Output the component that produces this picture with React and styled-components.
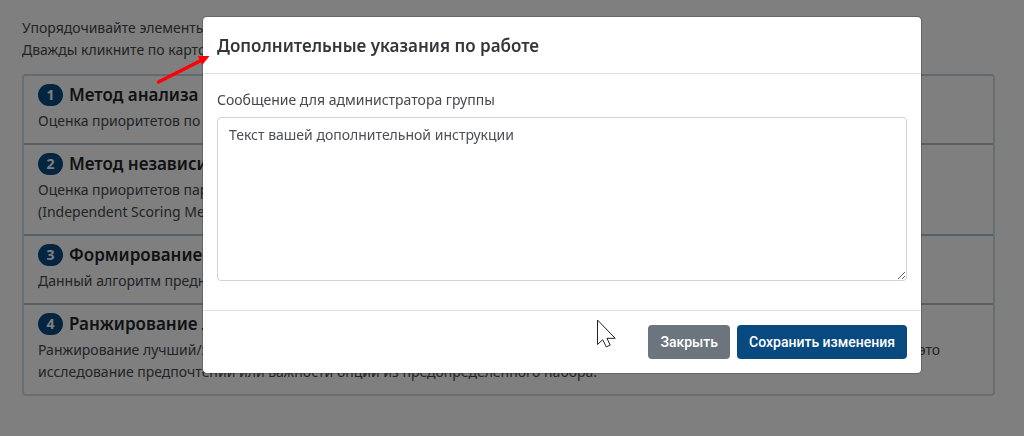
import { useState } from "react";
import styled, { createGlobalStyle } from "styled-components";

const GlobalStyle = createGlobalStyle`
  * {
    box-sizing: border-box;
  }

  body {
    margin: 0;
    color: #45494e;
    background-color: #ffffff;
    font-family: "Noto Sans", "Open Sans", sans-serif;
    font-size: 14px;
    line-height: 22px;
  }
`;

const Page = styled.main`
  min-height: 100vh;
  padding: 17px 29px 40px 22px;
`;

const Intro = styled.p`
  margin: 0 0 13px;
`;

const MethodList = styled.ol`
  list-style: none;
  margin: 0;
  padding: 0;
  border: 2px solid #d2dce6;
  border-top-color: #c4d4e2;
  border-radius: 4px;
`;

const MethodItem = styled.li`
  padding: 8px 14px 11px;

  & + & {
    border-top: 2px solid #a8c0d4;
  }
`;

const MethodTitle = styled.h2`
  display: flex;
  align-items: center;
  gap: 6px;
  margin: 0 0 4px;
  color: #212529;
  font-size: 17px;
  font-weight: 600;
  line-height: 22px;
`;

const Badge = styled.span`
  width: 25px;
  border-radius: 11px;
  color: #ffffff;
  background-color: #084a80;
  font-size: 14px;
  font-weight: 700;
  text-align: center;
`;

const MethodText = styled.p`
  margin: 0;
`;

const Backdrop = styled.div`
  position: fixed;
  inset: 0;
  padding: 17px 103px 17px 203px;
  background-color: rgba(0, 0, 0, 0.5);
`;

const Dialog = styled.form`
  border-radius: 4px;
  background-color: #ffffff;
  box-shadow: 0 0 0 1px rgba(0, 0, 0, 0.2);
`;

const DialogHeader = styled.header`
  padding: 18px 14px 16px;
  border-bottom: 1px solid #dee2e6;
`;

const DialogTitle = styled.h1`
  margin: 0;
  color: #33373c;
  font-size: 17px;
  font-weight: 600;
  line-height: 22px;
`;

const DialogBody = styled.div`
  padding: 15px 14px 29px;
`;

const Label = styled.label`
  display: block;
  margin-bottom: 6px;
`;

const TextArea = styled.textarea`
  display: block;
  width: 100%;
  height: 164px;
  padding: 6px 11px;
  border: 1px solid #ced4da;
  border-radius: 4px;
  color: #495057;
  font: inherit;
  resize: vertical;
`;

const DialogFooter = styled.footer`
  display: flex;
  justify-content: flex-end;
  gap: 7px;
  padding: 14px;
  border-top: 1px solid #dee2e6;
`;

const Button = styled.button`
  padding: 6px 12px;
  border: 0;
  border-radius: 4px;
  color: #ffffff;
  background-color: ${({ $primary }) => ($primary ? "#084a80" : "#6c757d")};
  font-family: Roboto, sans-serif;
  font-size: 14px;
  font-weight: 500;
  line-height: 22px;
`;

const Arrow = styled.svg`
  position: absolute;
  left: 155px;
  top: 53px;
  pointer-events: none;
`;

const Cursor = styled.svg`
  position: absolute;
  left: 596px;
  top: 318px;
  pointer-events: none;
`;

const methods = [
  {
    title: "Метод анализа иерархий",
    lines: ["Оценка приоритетов по методу анализа иерархий."],
  },
  {
    title: "Метод независимых оценок",
    lines: [
      "Оценка приоритетов параметров методом независимых оценок",
      "(Independent Scoring Method).",
    ],
  },
  {
    title: "Формирование рейтинга",
    lines: ["Данный алгоритм предназначен для формирования рейтинга."],
  },
  {
    title: "Ранжирование лучший/худший",
    lines: [
      "Ранжирование лучший/худший (Best-Worst Scaling) — методы сравнения вариантов выбора в выделенной группе участников, и это",
      "исследование предпочтений или важности опций из предопределенного набора.",
    ],
  },
];

export default function App() {
  const [message, setMessage] = useState("Текст вашей дополнительной инструкции");

  return (
    <>
      <GlobalStyle />
      <Page>
        <Intro>
          Упорядочивайте элементы, перетаскивая карточки.
          <br />
          Дважды кликните по карточке для редактирования.
        </Intro>
        <MethodList>
          {methods.map((method, index) => (
            <MethodItem key={method.title}>
              <MethodTitle>
                <Badge>{index + 1}</Badge>
                {method.title}
              </MethodTitle>
              {method.lines.map((line) => (
                <MethodText key={line}>{line}</MethodText>
              ))}
            </MethodItem>
          ))}
        </MethodList>
      </Page>
      <Backdrop>
        <Dialog
          role="dialog"
          aria-labelledby="dialog-title"
          onSubmit={(event) => event.preventDefault()}
        >
          <DialogHeader>
            <DialogTitle id="dialog-title">
              Дополнительные указания по работе
            </DialogTitle>
          </DialogHeader>
          <DialogBody>
            <Label htmlFor="message">Сообщение для администратора группы</Label>
            <TextArea
              id="message"
              spellCheck={false}
              value={message}
              onChange={(event) => setMessage(event.target.value)}
            />
          </DialogBody>
          <DialogFooter>
            <Button type="button">Закрыть</Button>
            <Button type="submit" $primary>
              Сохранить изменения
            </Button>
          </DialogFooter>
        </Dialog>
        <Arrow width="56" height="32" viewBox="0 0 56 32" aria-hidden="true">
          <path
            d="M3.5 29 46 7.5"
            stroke="#ff0000"
            strokeWidth="3.4"
            strokeLinecap="round"
          />
          <path d="M54.5 3 42.8 3 47.2 12Z" fill="#ff0000" />
        </Arrow>
        <Cursor width="22" height="32" viewBox="0 0 22 32" aria-hidden="true">
          <path
            d="M1.5 2v24.5l5.2-4.8 3.6 7.2 3.9-1.8-3.2-6.8h8.2Z"
            fill="#ffffff"
            stroke="#22222c"
            strokeLinejoin="round"
          />
        </Cursor>
      </Backdrop>
    </>
  );
}
